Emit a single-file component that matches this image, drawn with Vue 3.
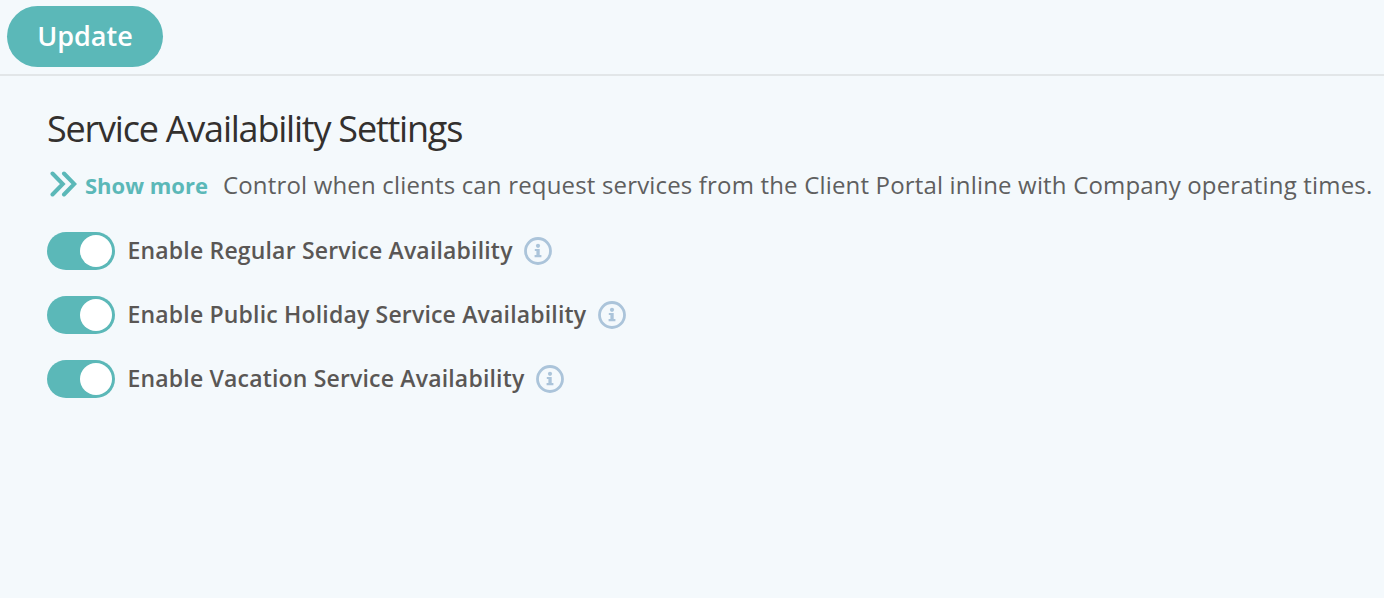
<script setup>
const rows = [
  'Enable Regular Service Availability',
  'Enable Public Holiday Service Availability',
  'Enable Vacation Service Availability',
]
</script>

<template>
  <div class="page">
    <div class="bar">
      <button class="update">Update</button>
    </div>
    <div class="content">
      <h1 class="title">Service Availability Settings</h1>
      <div class="desc">
        <span class="more">
          <svg class="chev" width="28" height="26" viewBox="0 0 28 26" fill="none" stroke="#5bb8b8" stroke-width="4" stroke-linecap="round" stroke-linejoin="miter">
            <path d="M3.5 2.5 L13.8 13 L3.5 23.5" />
            <path d="M15 2.5 L25.3 13 L15 23.5" />
          </svg>
          <span class="more-text">Show more</span>
        </span>
        <span class="desc-text">Control when clients can request services from the Client Portal inline with Company operating times.</span>
      </div>
      <div class="rows">
        <div v-for="r in rows" :key="r" class="row">
          <span class="toggle"><span class="knob"></span></span>
          <span class="label">{{ r }}</span>
          <svg class="info" width="28" height="28" viewBox="0 0 28 28">
            <circle cx="14" cy="14" r="12.5" fill="none" stroke="#abc4da" stroke-width="2.8" />
            <circle cx="14" cy="8.8" r="2.1" fill="#abc4da" />
            <path d="M10.8 12 H15.7 V18 H17.4 V20.2 H10.6 V18 H12.4 V14 H10.8 Z" fill="#abc4da" />
          </svg>
        </div>
      </div>
    </div>
  </div>
</template>

<style scoped>
.page {
  width: 1384px;
  height: 598px;
  background: #f4f9fc;
  font-family: "Open Sans", sans-serif;
  overflow: hidden;
}
.bar {
  box-sizing: content-box;
  height: 68px;
  padding: 6px 0 0 7px;
  border-bottom: 2px solid #e2e6e8;
}
.update {
  display: block;
  width: 156px;
  height: 61px;
  border: 0;
  border-radius: 31px;
  background: #5bb8b8;
  color: #fff;
  font-family: inherit;
  font-size: 27px;
  font-weight: 600;
  padding: 0 0 2px;
}
.content {
  padding: 0 0 0 47px;
}
.title {
  margin: 30px 0 0;
  font-size: 36px;
  line-height: 46px;
  font-weight: 400;
  letter-spacing: -1.22px;
  color: #33302e;
}
.desc {
  display: flex;
  align-items: center;
  margin-top: 18px;
  height: 30px;
  white-space: nowrap;
}
.more {
  display: flex;
  align-items: center;
  margin-left: 2px;
}
.chev {
  display: block;
  margin-bottom: 2px;
}
.more-text {
  margin-left: 8px;
  font-size: 22px;
  font-weight: 700;
  color: #5bb8b8;
}
.desc-text {
  margin-left: 15px;
  margin-bottom: 2px;
  font-size: 24px;
  letter-spacing: 0.17px;
  color: #5f5f5f;
}
.rows {
  margin-top: 32px;
  display: flex;
  flex-direction: column;
  gap: 26px;
}
.row {
  display: flex;
  align-items: center;
  height: 38px;
}
.toggle {
  display: flex;
  justify-content: flex-end;
  align-items: center;
  box-sizing: border-box;
  width: 68px;
  height: 38px;
  border-radius: 19px;
  background: #5bb8b8;
  padding-right: 3px;
}
.knob {
  width: 32px;
  height: 32px;
  border-radius: 50%;
  background: #fff;
}
.label {
  margin-left: 12.5px;
  margin-bottom: 2px;
  font-size: 23px;
  letter-spacing: 0.18px;
  font-weight: 600;
  color: #5a5755;
  white-space: nowrap;
}
.info {
  margin-left: 11.4px;
  display: block;
}
</style>
